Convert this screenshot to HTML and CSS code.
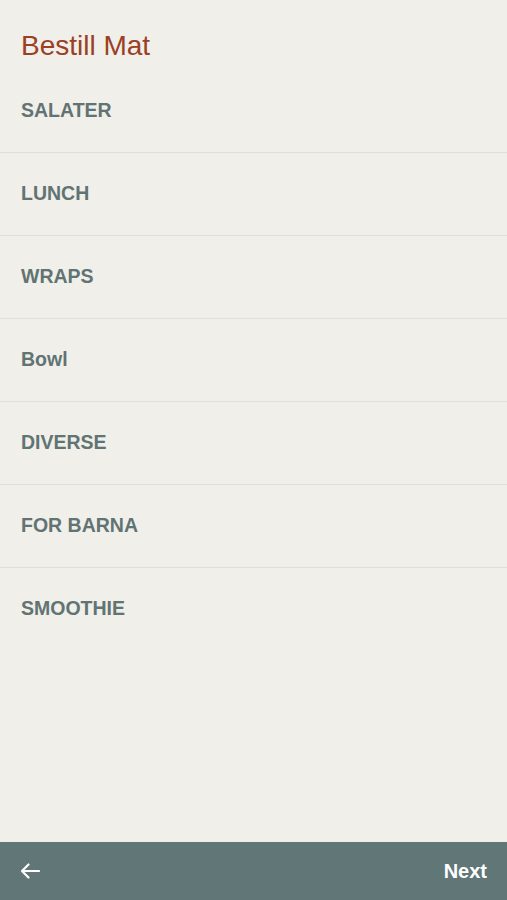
FILE: index.html
```html
<!DOCTYPE html>
<html lang="no">
<head>
  <meta charset="UTF-8">
  <meta name="viewport" content="width=device-width, initial-scale=1.0">
  <title>Bestill Mat</title>
  <link rel="stylesheet" href="styles.css">
</head>
<body>
  <div class="screen">
    <h1 class="title">Bestill Mat</h1>

    <!-- Categories -->
    <ul class="categories">
      <li class="category">SALATER</li>
      <li class="category">LUNCH</li>
      <li class="category">WRAPS</li>
      <li class="category">Bowl</li>
      <li class="category">DIVERSE</li>
      <li class="category">FOR BARNA</li>
      <li class="category last">SMOOTHIE</li>
    </ul>

    <!-- Bottom navigation -->
    <div class="bottom-bar">
      <button class="back-button" aria-label="Back">
        <svg width="20" height="16" viewBox="0 0 20 16">
          <path d="M19 8H2M8.5 1.5L2 8L8.5 14.5" fill="none" stroke="white" stroke-width="2.2" stroke-linecap="round" stroke-linejoin="round"/>
        </svg>
      </button>
      <button class="next-button">Next</button>
    </div>
  </div>
</body>
</html>
```

FILE: styles.css
```css
/* General page styling */
body {
  margin: 0;
  padding: 0;
  font-family: 'Liberation Sans', Arial, sans-serif;
  background-color: rgb(240, 239, 234);
}

.screen {
  height: 900px;
  display: flex;
  flex-direction: column;
}

.title {
  margin: 29px 0 7px;
  padding-left: 21px;
  font-size: 28px;
  line-height: 34px;
  font-weight: normal;
  color: rgb(154, 64, 36);
}

/* Category list */
.categories {
  list-style: none;
  margin: 0;
  padding: 0;
  flex: 1;
}

.category {
  height: 80px;
  display: flex;
  align-items: center;
  padding: 0 0 2px 21px;
  border-bottom: 1px solid rgb(224, 224, 218);
  font-size: 19.5px;
  font-weight: bold;
  color: rgb(97, 115, 114);
}

.category.last {
  border-bottom: none;
}

/* Bottom bar */
.bottom-bar {
  height: 58px;
  display: flex;
  align-items: center;
  justify-content: space-between;
  padding: 0 20px 0 20px;
  background-color: rgb(97, 118, 118);
}

.back-button, .next-button {
  background: none;
  border: none;
  padding: 0;
  color: white;
  cursor: pointer;
  font-family: inherit;
}

.back-button svg {
  display: block;
}

.next-button {
  font-size: 20px;
  font-weight: bold;
}
```
